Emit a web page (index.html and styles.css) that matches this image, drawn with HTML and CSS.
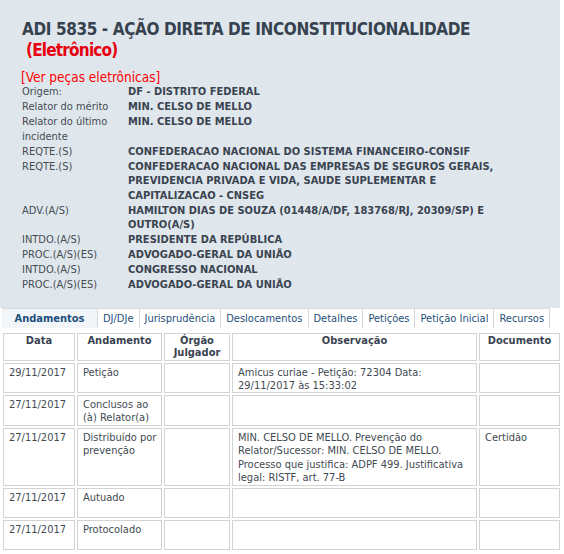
FILE: index.html
```html
<!DOCTYPE html>
<html lang="pt">
<head>
<meta charset="utf-8">
<link rel="stylesheet" href="styles.css">
</head>
<body>
<div class="panel">
  <h1 class="title">ADI 5835 - AÇÃO DIRETA DE INCONSTITUCIONALIDADE<br><span class="eletr">(Eletrônico)</span></h1>
  <div class="ver">[Ver peças eletrônicas]</div>
  <div class="info">
    <div class="lbl">Origem:</div><div class="val">DF - DISTRITO FEDERAL</div>
    <div class="lbl">Relator do mérito</div><div class="val">MIN. CELSO DE MELLO</div>
    <div class="lbl">Relator do último incidente</div><div class="val">MIN. CELSO DE MELLO</div>
    <div class="lbl">REQTE.(S)</div><div class="val">CONFEDERACAO NACIONAL DO SISTEMA FINANCEIRO-CONSIF</div>
    <div class="lbl">REQTE.(S)</div><div class="val">CONFEDERACAO NACIONAL DAS EMPRESAS DE SEGUROS GERAIS, PREVIDENCIA PRIVADA E VIDA, SAUDE SUPLEMENTAR E CAPITALIZACAO - CNSEG</div>
    <div class="lbl">ADV.(A/S)</div><div class="val">HAMILTON DIAS DE SOUZA (01448/A/DF, 183768/RJ, 20309/SP) E OUTRO(A/S)</div>
    <div class="lbl">INTDO.(A/S)</div><div class="val">PRESIDENTE DA REPÚBLICA</div>
    <div class="lbl">PROC.(A/S)(ES)</div><div class="val">ADVOGADO-GERAL DA UNIÃO</div>
    <div class="lbl">INTDO.(A/S)</div><div class="val">CONGRESSO NACIONAL</div>
    <div class="lbl">PROC.(A/S)(ES)</div><div class="val">ADVOGADO-GERAL DA UNIÃO</div>
  </div>
</div>
<div class="tabs">
  <div class="tab active">Andamentos</div>
  <div class="tab">DJ/DJe</div>
  <div class="tab">Jurisprudência</div>
  <div class="tab">Deslocamentos</div>
  <div class="tab">Detalhes</div>
  <div class="tab">Petições</div>
  <div class="tab">Petição Inicial</div>
  <div class="tab">Recursos</div>
</div>
<table class="grid">
  <colgroup>
    <col class="c1"><col class="c2"><col class="c3"><col class="c4"><col class="c5">
  </colgroup>
  <thead>
    <tr><th>Data</th><th>Andamento</th><th>Órgão Julgador</th><th>Observação</th><th>Documento</th></tr>
  </thead>
  <tbody>
    <tr><td>29/11/2017</td><td>Petição</td><td></td><td>Amicus curiae - Petição: 72304 Data: 29/11/2017 às 15:33:02</td><td></td></tr>
    <tr><td>27/11/2017</td><td>Conclusos ao (à) Relator(a)</td><td></td><td></td><td></td></tr>
    <tr><td>27/11/2017</td><td>Distribuído por prevenção</td><td></td><td>MIN. CELSO DE MELLO. Prevenção do Relator/Sucessor: MIN. CELSO DE MELLO. Processo que justifica: ADPF 499. Justificativa legal: RISTF, art. 77-B</td><td>Certidão</td></tr>
    <tr><td>27/11/2017</td><td>Autuado</td><td></td><td></td><td></td></tr>
    <tr><td>27/11/2017</td><td>Protocolado</td><td></td><td></td><td></td></tr>
  </tbody>
</table>
</body>
</html>
```
FILE: styles.css
```css
html, body {
  margin: 0;
  padding: 0;
  background: #ffffff;
}
body {
  font-family: "DejaVu Sans Condensed", "DejaVu Sans", sans-serif;
  font-size: 11px;
  color: #333;
  width: 564px;
}
.panel {
  background: #dfe7ed;
  width: 560px;
  padding: 19px 0 15px 0;
  box-sizing: border-box;
}
.title {
  margin: 0 0 0 22px;
  font-size: 17px;
  line-height: 21px;
  font-weight: bold;
  color: #36424f;
  letter-spacing: -0.4px;
}
.eletr {
  color: #e8000f;
  margin-left: 4px;
  font-size: 17px;
  letter-spacing: -0.8px;
}
.ver {
  margin: 8px 0 0 21px;
  color: #ff0000;
  font-size: 13.5px;
  line-height: 16px;
}
.info {
  display: grid;
  grid-template-columns: 106px 392px;
  row-gap: 0.5px;
  margin-left: 22px;
  line-height: 14.5px;
}
.lbl {
  color: #454b52;
  padding-right: 14px;
}
.val {
  font-weight: bold;
  color: #3a4350;
}
.tabs {
  display: flex;
  margin: 0 0 0 2px;
  height: 20px;
}
.tab {
  border: 1px solid #d6dade;
  border-left: none;
  border-bottom: none;
  padding: 0 5px;
  line-height: 19px;
  color: #1f4f7a;
  font-size: 11px;
  background: #fff;
}
.tab.active {
  width: 96px;
  box-sizing: border-box;
  text-align: center;
  font-weight: bold;
  background: #f3f6f8;
  border-top: 1px solid #d6dade;
  border-right: 1px solid #d6dade;
  color: #1b4f7c;
}
.grid {
  border-collapse: separate;
  border-spacing: 2px;
  margin: 3px 0 0 1px;
  width: 561px;
  table-layout: fixed;
}
.c1 { width: 72px; }
.c2 { width: 85px; }
.c3 { width: 66px; }
.c4 { width: 245px; }
.c5 { width: 81px; }
.grid th, .grid td {
  border: 1px solid #d3d3d3;
  vertical-align: top;
  padding: 2px 1px 0 5px;
  line-height: 13.5px;
  text-align: left;
  color: #424a52;
}
.grid td {
  height: 26px;
}
.grid tbody tr:first-child td {
  line-height: 13px;
}
.grid th {
  text-align: center;
  font-weight: bold;
  height: 23px;
  padding: 1px 1px 0 1px;
  line-height: 12.5px;
  color: #3a4350;
}
```
